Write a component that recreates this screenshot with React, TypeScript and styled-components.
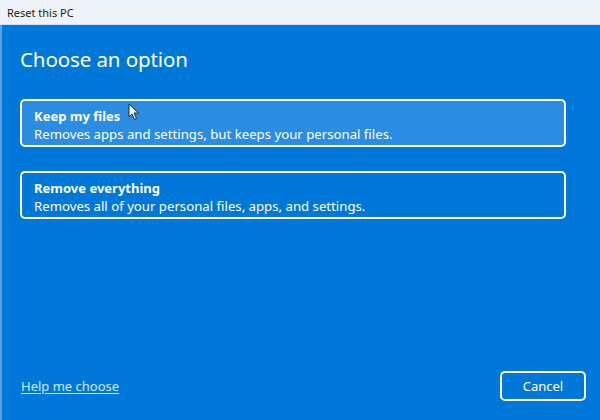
import styled, { createGlobalStyle } from 'styled-components';

const GlobalStyle = createGlobalStyle`
  html, body {
    margin: 0;
    padding: 0;
    width: 600px;
    height: 420px;
    overflow: hidden;
    font-family: "Noto Sans", "Open Sans", sans-serif;
  }
`;

const Window = styled.div`
  width: 600px;
  height: 420px;
  display: flex;
  flex-direction: column;
  background: #0078d9;
  border-left: 2px solid #5c9ee8;
  box-sizing: border-box;
`;

const TitleBar = styled.div`
  height: 24px;
  flex-shrink: 0;
  background: #eef2f9;
  display: flex;
  align-items: center;
  padding-left: 7px;
  font-size: 11px;
  color: #1b1b1b;
  border-bottom: 1px solid #d6def0;
  margin-left: -2px;
`;

const Body = styled.div`
  flex: 1;
  display: flex;
  flex-direction: column;
  padding: 19px 14px 19px 18px;
  color: #fff;
`;

const Heading = styled.h1`
  margin: 0 0 25px;
  font-weight: 400;
  font-size: 20.5px;
  line-height: 30px;
  letter-spacing: -0.1px;
`;

const Options = styled.div`
  display: flex;
  flex-direction: column;
  gap: 24px;
`;

const Option = styled.div<{ $hover?: boolean }>`
  position: relative;
  width: 546px;
  height: 48px;
  box-sizing: border-box;
  border: 2px solid #ffffff;
  border-radius: 5px;
  background: ${({ $hover }) => ($hover ? '#2a8ce3' : 'transparent')};
  padding: 6px 12px 0;
  display: flex;
  flex-direction: column;
`;

const OptionTitle = styled.div`
  font-weight: 700;
  font-size: 13px;
  line-height: 18px;
`;

const OptionText = styled.div`
  font-size: 13.2px;
  line-height: 18px;
`;

const Cursor = styled.svg`
  position: absolute;
  left: 106px;
  top: 2px;
`;

const Footer = styled.div`
  margin-top: auto;
  display: flex;
  align-items: center;
  justify-content: space-between;
`;

const HelpLink = styled.a`
  color: #d4e7f8;
  font-size: 13px;
  text-decoration: underline;
  text-underline-offset: 2px;
  margin-left: 1px;
  margin-top: -1px;
`;

const CancelButton = styled.button`
  width: 86px;
  height: 30px;
  border: 2px solid #ffffff;
  border-radius: 5px;
  background: transparent;
  color: #fff;
  font-family: inherit;
  font-size: 13px;
`;

export default function App() {
  return (
    <>
      <GlobalStyle />
      <Window>
        <TitleBar>Reset this PC</TitleBar>
        <Body>
          <Heading>Choose an option</Heading>
          <Options>
            <Option $hover>
              <OptionTitle>Keep my files</OptionTitle>
              <OptionText>Removes apps and settings, but keeps your personal files.</OptionText>
              <Cursor width="12" height="18" viewBox="0 0 12 18">
                <path d="M1 1 L1 14 L4 11 L6.5 16.5 L8.5 15.5 L6 10 L10.5 10 Z" fill="#fff" stroke="#222" strokeWidth="1" strokeLinejoin="round" />
              </Cursor>
            </Option>
            <Option>
              <OptionTitle>Remove everything</OptionTitle>
              <OptionText>Removes all of your personal files, apps, and settings.</OptionText>
            </Option>
          </Options>
          <Footer>
            <HelpLink>Help me choose</HelpLink>
            <CancelButton>Cancel</CancelButton>
          </Footer>
        </Body>
      </Window>
    </>
  );
}
